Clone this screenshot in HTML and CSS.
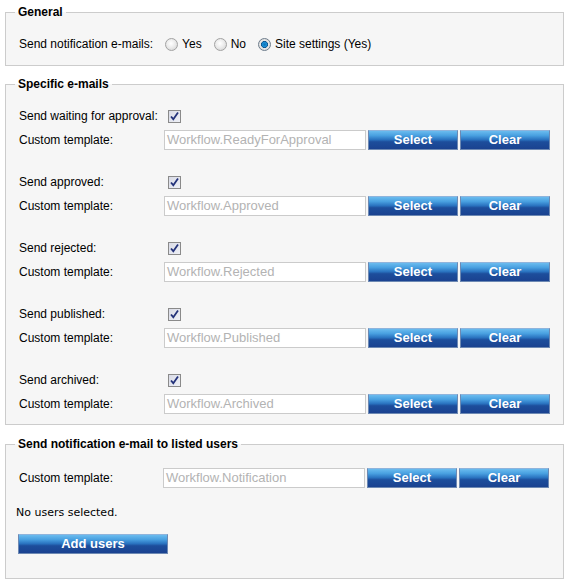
FILE: index.html
```html
<!DOCTYPE html>
<html>
<head>
<meta charset="utf-8">
<link rel="stylesheet" href="styles.css">
</head>
<body>
<div class="page">
  <fieldset class="box box-general">
    <legend>General</legend>
    <div class="row">
      <span class="notif-label">Send notification e-mails:</span>
      <span class="opt"><span class="radio"></span>Yes</span>
      <span class="opt"><span class="radio"></span>No</span>
      <span class="opt"><span class="radio checked"></span>Site settings (Yes)</span>
    </div>
  </fieldset>

  <fieldset class="box box-specific">
    <legend>Specific e-mails</legend>
    <div class="group">
      <div class="row"><span class="label">Send waiting for approval:</span><span class="cb"><svg width="13" height="13" viewBox="0 0 13 13"><path d="M3 6.5 L5.3 9.2 L10 2.6" fill="none" stroke="#23327a" stroke-width="1.8"/></svg></span></div>
      <div class="row"><span class="label">Custom template:</span><span class="tpl">Workflow.ReadyForApproval</span><button class="btn">Select</button><button class="btn">Clear</button></div>
    </div>
    <div class="group">
      <div class="row"><span class="label">Send approved:</span><span class="cb"><svg width="13" height="13" viewBox="0 0 13 13"><path d="M3 6.5 L5.3 9.2 L10 2.6" fill="none" stroke="#23327a" stroke-width="1.8"/></svg></span></div>
      <div class="row"><span class="label">Custom template:</span><span class="tpl">Workflow.Approved</span><button class="btn">Select</button><button class="btn">Clear</button></div>
    </div>
    <div class="group">
      <div class="row"><span class="label">Send rejected:</span><span class="cb"><svg width="13" height="13" viewBox="0 0 13 13"><path d="M3 6.5 L5.3 9.2 L10 2.6" fill="none" stroke="#23327a" stroke-width="1.8"/></svg></span></div>
      <div class="row"><span class="label">Custom template:</span><span class="tpl">Workflow.Rejected</span><button class="btn">Select</button><button class="btn">Clear</button></div>
    </div>
    <div class="group">
      <div class="row"><span class="label">Send published:</span><span class="cb"><svg width="13" height="13" viewBox="0 0 13 13"><path d="M3 6.5 L5.3 9.2 L10 2.6" fill="none" stroke="#23327a" stroke-width="1.8"/></svg></span></div>
      <div class="row"><span class="label">Custom template:</span><span class="tpl">Workflow.Published</span><button class="btn">Select</button><button class="btn">Clear</button></div>
    </div>
    <div class="group">
      <div class="row"><span class="label">Send archived:</span><span class="cb"><svg width="13" height="13" viewBox="0 0 13 13"><path d="M3 6.5 L5.3 9.2 L10 2.6" fill="none" stroke="#23327a" stroke-width="1.8"/></svg></span></div>
      <div class="row"><span class="label">Custom template:</span><span class="tpl">Workflow.Archived</span><button class="btn">Select</button><button class="btn">Clear</button></div>
    </div>
  </fieldset>

  <fieldset class="box box-users">
    <legend>Send notification e-mail to listed users</legend>
    <div class="row"><span class="label label-narrow">Custom template:</span><span class="tpl">Workflow.Notification</span><button class="btn">Select</button><button class="btn">Clear</button></div>
    <div class="nousers">No users selected.</div>
    <button class="btn btn-wide">Add users</button>
  </fieldset>
</div>
</body>
</html>
```

FILE: styles.css
```css
html, body {
  margin: 0;
  padding: 0;
  background: #ffffff;
}

.page {
  padding: 5px 0 0 5px;
  font-family: "Liberation Sans", Arial, sans-serif;
  font-size: 12px;
  color: #000;
}

.box {
  box-sizing: border-box;
  width: 559px;
  margin: 0 0 12px 0;
  border: 1px solid #cccccc;
  background: #f6f6f6;
  padding: 13px 13px 8px 13px;
  min-width: 0;
}

.box legend {
  font-family: "Liberation Sans", Arial, sans-serif;
  font-weight: bold;
  font-size: 12px;
  line-height: 14px;
  padding: 0 3px;
  margin-left: -4px;
  color: #000;
}

.box-general {
  margin-bottom: 11px;
  padding-bottom: 9px;
}

.row {
  display: flex;
  align-items: center;
  height: 24px;
}

.group + .group {
  margin-top: 18px;
}

.label {
  width: 145px;
  flex: none;
}

.label-narrow {
  width: 144px;
}

.notif-label {
  margin-right: 12px;
}

.opt {
  display: inline-flex;
  align-items: center;
  margin-right: 12px;
}

.radio {
  box-sizing: border-box;
  width: 13px;
  height: 13px;
  border-radius: 50%;
  border: 1px solid #a2a2a2;
  background: radial-gradient(circle at 45% 40%, #ffffff 0%, #ececec 45%, #cfcfcf 100%);
  margin-right: 4px;
  position: relative;
}

.radio.checked {
  border-color: #6e7d8c;
  background: radial-gradient(circle at 50% 50%, #0b73b8 0%, #1c8fd6 28%, #0d4f86 42%, #e8e8e8 48%, #d3d3d3 100%);
}

.cb {
  box-sizing: border-box;
  width: 13px;
  height: 13px;
  margin-left: 4px;
  border: 1px solid #8a8a8a;
  background: linear-gradient(135deg, #d9dbe6 0%, #eef0f6 100%);
  display: flex;
  align-items: center;
  justify-content: center;
}

.cb svg {
  display: block;
  margin: -1px;
}

.tpl {
  box-sizing: border-box;
  width: 202px;
  height: 20px;
  border: 1px solid #cbcbcb;
  background: #ffffff;
  color: #b3b3b3;
  font-size: 13px;
  line-height: 18px;
  padding-left: 2px;
  white-space: nowrap;
  overflow: hidden;
  flex: none;
}

.btn {
  box-sizing: border-box;
  width: 90px;
  height: 20px;
  margin: 0 0 0 2px;
  padding: 0;
  border: 1px solid #6d89b3;
  border-top-color: #8fb4dc;
  background: linear-gradient(#6bbcef 0%, #49a0e0 25%, #2a73c0 48%, #1d4e9c 60%, #1a4290 100%);
  color: #ffffff;
  font-family: "Liberation Sans", Arial, sans-serif;
  font-weight: bold;
  font-size: 13px;
  line-height: 18px;
  flex: none;
  cursor: pointer;
}

.box-users {
  padding-bottom: 24px;
}

.box-users > .row {
  margin-top: 2px;
}

.nousers {
  font-family: "DejaVu Sans", Tahoma, sans-serif;
  font-size: 11px;
  line-height: 17px;
  margin: 14px 0 0 -3px;
}

.btn-wide {
  display: block;
  width: 150px;
  margin: 13px 0 0 -1px;
}
```
